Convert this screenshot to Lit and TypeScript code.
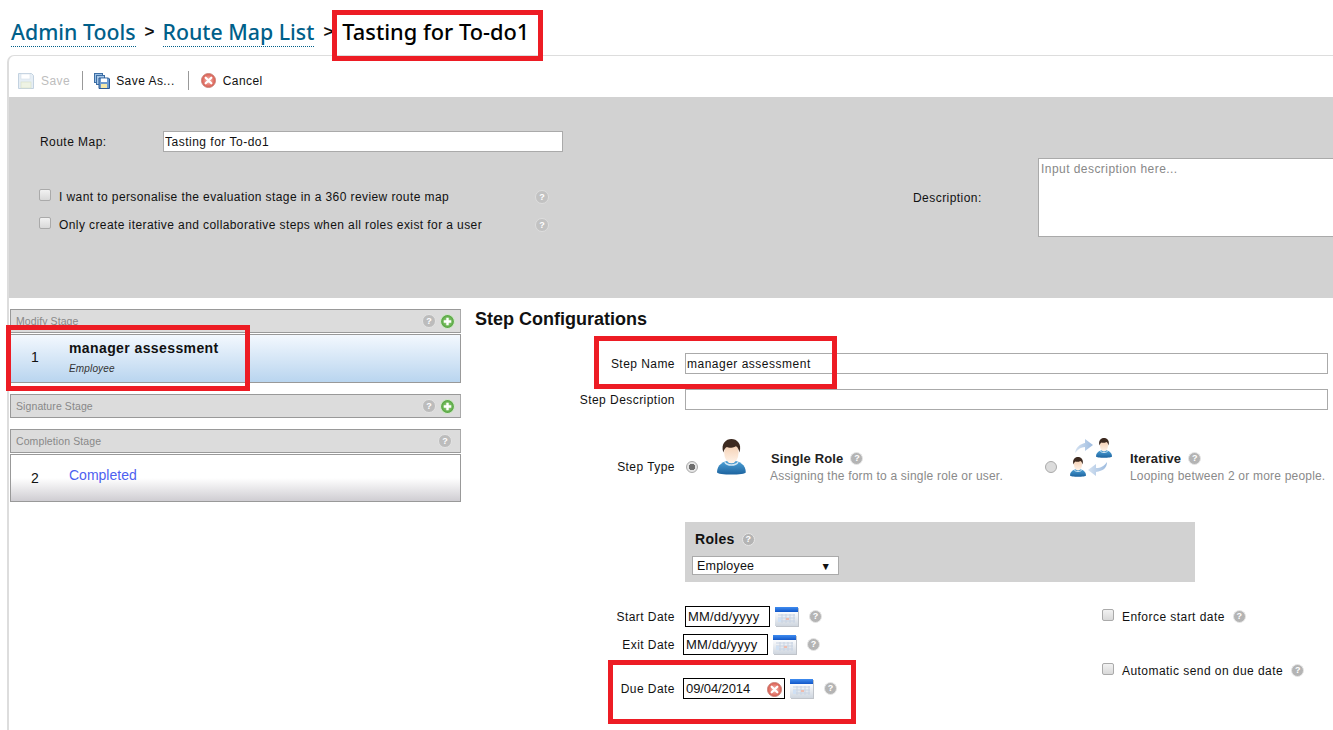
import { LitElement, html, css, svg } from "lit";
import { customElement } from "lit/decorators.js";

const defs = svg`<defs>
  <linearGradient id="sk" x1="0" y1="0" x2="0" y2="1"><stop offset="0" stop-color="#f3c9a8"/><stop offset="1" stop-color="#fff4ea"/></linearGradient>
  <linearGradient id="bl" x1="0" y1="0" x2="0" y2="1"><stop offset="0" stop-color="#4fa3d8"/><stop offset="1" stop-color="#1c639f"/></linearGradient>
  <linearGradient id="ar" x1="0" y1="0" x2="1" y2="0"><stop offset="0" stop-color="#d5e2f1"/><stop offset="1" stop-color="#9dbbdf"/></linearGradient>
  <linearGradient id="calt" x1="0" y1="0" x2="0" y2="1"><stop offset="0" stop-color="#3f8cf0"/><stop offset="1" stop-color="#1257c8"/></linearGradient>
  <linearGradient id="calb" x1="0" y1="0" x2="0" y2="1"><stop offset="0" stop-color="#fbfcfe"/><stop offset="1" stop-color="#cfd6df"/></linearGradient>
  <radialGradient id="rd"><stop offset="0" stop-color="#f8c2ba"/><stop offset="1" stop-color="#d9574b"/></radialGradient>
  <radialGradient id="gr"><stop offset="0" stop-color="#a6dc8c"/><stop offset="1" stop-color="#4c9f38"/></radialGradient>
</defs>`;

const person = (x: number, y: number, s: number) => svg`<g transform="translate(${x} ${y}) scale(${s})">
  <path d="M0 37C0 29 7 24 16 24S32 29 32 37C32 39 24 39.500 16 39.500S0 39 0 37z" fill="url(#bl)"/>
  <path d="M9 25c2 4 12 4 14 0l1 1c-2 5-14 5-16 0z" fill="#cfe6f4"/>
  <ellipse cx="16" cy="15" rx="8" ry="12" fill="url(#sk)"/>
  <path d="M7 15C4 5 10 0 16 0S28 5 25 15C24 11 23 9 21 8 17 10 13 10 11 9 9 10 8 12 7 15z" fill="#3d2a20"/>
</g>`;

const singleIcon = html`<svg class="person" width="33" height="39" viewBox="0 0 33 39">${defs}${person(1, 1, 0.9)}</svg>`;
const iterIcon = html`<svg class="iter" width="44" height="40" viewBox="0 0 44 40">${defs}
  <path d="M7 16C8 10 12 7 17 6V2L25 8 17 14V10C13 10 10 12 7 16z" fill="url(#ar)"/>
  <path d="M39 25C39 31 35 34 28 35V39L20 33 28 27V31C33 31 36 29 39 25z" fill="url(#ar)"/>
  ${person(28, 1, 0.5)}${person(2, 20, 0.5)}
</svg>`;
const floppy = html`<svg width="16" height="16" viewBox="0 0 16 16"><path d="M.5.5h13l2 2v13H.5z" fill="#e6eef5" stroke="#c3d2e0"/><rect x="3" y="1" width="9" height="5" fill="#fff" stroke="#d5dfe9" stroke-width=".6"/><rect x="3" y="9" width="10" height="6" fill="#eef3e4" stroke="#d5dfc5" stroke-width=".6"/></svg>`;
const saveAs = html`<svg width="16" height="16" viewBox="0 0 16 16"><rect x=".5" y=".5" width="8" height="9" fill="#9cc0e4" stroke="#3c6ea5"/><rect x="2.500" y="2.500" width="8" height="9" fill="#a9c8e8" stroke="#3c6ea5"/><path d="M5 5h9.500l1 1v9.500H5z" fill="#6c9bd0" stroke="#2b5a94"/><rect x="7" y="5.500" width="6" height="3.500" fill="#fff"/><rect x="7" y="11" width="6" height="4" fill="#f3e7a8"/></svg>`;
const xIcon = (s: number) => html`<svg class="x" width="${s}" height="${s}" viewBox="0 0 16 16">${defs}<circle cx="8" cy="8" r="7.500" fill="url(#rd)" stroke="#c9857c"/><path d="M5 5l6 6M11 5l-6 6" stroke="#fff" stroke-width="2.400" stroke-linecap="round"/></svg>`;
const plus = html`<svg class="plus" width="15" height="15" viewBox="0 0 14 14">${defs}<circle cx="7" cy="7" r="6.500" fill="url(#gr)" stroke="#d5e8cf"/><path d="M7 3.500v7M3.500 7h7" stroke="#fff" stroke-width="2.200"/></svg>`;
const cal = html`<svg class="cal" width="24" height="20" viewBox="0 0 24 20">${defs}<rect x="1" y="1" width="23" height="19" fill="#c0c4ca"/><rect x="0" y="0" width="23" height="5" fill="url(#calt)"/><rect x="0" y="5" width="23" height="14" fill="url(#calb)"/><path d="M3 8h17M3 11h17M3 14h17M7 7v9M11 7v9M15 7v9M19 7v9" stroke="#c8d3e3"/><rect x="11" y="11" width="3" height="2" fill="#eebcae"/><rect x="3" y="11" width="3" height="4" fill="#cfe0f4"/></svg>`;
const help = () => html`<span class="help">?</span>`;

@customElement("app-root")
export class AppRoot extends LitElement {
  static styles = css`
    :host { display: block; position: relative; width: 1333px; height: 730px; overflow: hidden; background: #fff; font: 12px "Liberation Sans", Arial, sans-serif; color: #111; letter-spacing: .45px; }
    * { box-sizing: border-box; }
    .crumbs { height: 55px; padding: 14px 0 0 11px; display: flex; align-items: flex-start; font: 500 21.300px/36px "Noto Sans", sans-serif; letter-spacing: 0; color: #000; }
    .crumbs a { color: #00608a; border-bottom: 1px dotted #00608a; height: 33px; line-height: 35px; }
    .crumbs .sep { font: bold 17px/36px "Liberation Sans", sans-serif; margin: 0 8px 0 9px; color: #111; }
    .crumbs .last { font-size: 21.800px; margin-left: 1px; }
    .panel { margin-left: 7px; border-left: 2px solid #ddd; border-top: 1px solid #ddd; border-top-left-radius: 7px; height: 675px; }
    .toolbar { height: 41px; display: flex; align-items: center; padding: 8px 0 0 9px; }
    .toolbar .tb { display: flex; align-items: center; gap: 6px; }
    .toolbar .can { gap: 7px; }
    .toolbar .dis { color: #bdbdbd; gap: 7px; }
    .toolbar .div { width: 1px; height: 19px; background: #999; margin: 0 12px 0 13px; }
    .toolbar .tb:first-child + .div { margin-left: 12px; margin-right: 11px; }
    .gray { height: 201px; background: #d2d2d2; display: flex; }
    .gray .left { padding: 34px 0 0 31px; width: 904px; flex: none; }
    .gray .help { width: 14px; height: 14px; background: #c2c2c2; border-color: #dedede; }
    .routerow { display: flex; align-items: center; height: 21px; }
    .routerow label { width: 123px; }
    .routerow input { width: 400px; height: 21px; }
    input.txt { border: 1px solid #aaa; background: #fff; font: 12px "Liberation Sans", sans-serif; letter-spacing: .5px; padding: 0 1px; color: #111; outline: none; }
    .chk { display: flex; align-items: center; height: 28px; }
    .chks { margin-top: 31px; letter-spacing: .41px; }
    .box { appearance: none; -webkit-appearance: none; margin: -4px 8px 0 -1px; width: 12px; height: 12px; border: 1px solid #aaa; border-radius: 2px; background: linear-gradient(#f2f2f2, #d9d9d9); flex: none; }
    .chk span.t { width: 476px; }
    .help { display: inline-flex; align-items: center; justify-content: center; width: 13px; height: 13px; border-radius: 50%; background: #b4b4b4; border: 1px solid #e6e6e6; color: #fff; font: bold 9px/1 "Liberation Sans", sans-serif; letter-spacing: 0; flex: none; }
    .desc { display: flex; padding-top: 61px; }
    .desc label { width: 125px; padding-top: 33px; }
    .desc textarea { width: 320px; height: 79px; border: 1px solid #aaa; background: #fff; font: 12px "Liberation Sans", sans-serif; letter-spacing: .45px; padding: 3px 2px; resize: none; outline: none; flex: none; }
    .desc textarea::placeholder { color: #888; }
    .body { display: flex; padding-top: 11px; }
    .stages { margin-left: 1px; width: 451px; flex: none; }
    .sh { height: 24px; border: 1px solid #999; border-right-color: #aaa; background: #dcdcdc; display: flex; align-items: center; padding: 0 5px; color: #888; font-size: 10.500px; gap: 4px; letter-spacing: .1px; }
    .sh .n { flex: 1; }
    .sh .help { width: 14px; height: 14px; background: #bcbcbc; border-color: #e4e4e4; }
    .sh .help:last-child { margin-right: 3px; }
    .item { margin-top: 1px; height: 49px; border: 1px solid #999; display: flex; }
    .item .num { width: 58px; padding-left: 20px; font-size: 14px; letter-spacing: 0; line-height: 17px; flex: none; }
    .i1 { background: linear-gradient(#f3f8fe, #b9d5ef); }
    .i1 .num { padding-top: 14px; }
    .i1 .tt { font-weight: bold; font-size: 14px; padding-top: 5px; line-height: 17px; letter-spacing: .4px; }
    .i1 .sub { font-style: italic; font-size: 10px; color: #333; margin-top: 6px; line-height: 12px; letter-spacing: .15px; }
    .i2 { height: 48px; background: linear-gradient(#fff 0 50%, #cfcdd2); }
    .i2 .num { padding-top: 15px; }
    .i2 .tt { color: #4d5ff0; font-size: 14px; padding-top: 12px; line-height: 17px; letter-spacing: 0; }
    .gap1 { margin-top: 11px; }
    .gap2 { margin-top: 11px; }
    .form { margin-left: 14px; flex: 1; }
    .title { font: bold 18px/21px "Liberation Sans", sans-serif; letter-spacing: 0; color: #111; height: 22px; }
    .frow { display: flex; align-items: center; height: 21px; gap: 10px; }
    .frow label { width: 200px; text-align: right; flex: none; }
    .frow input { width: 643px; height: 21px; }
    .r1 { margin-top: 22px; }
    .r2 { margin-top: 15px; }
    .st { display: flex; margin-top: 28px; height: 84px; align-items: flex-start; }
    .st label { width: 200px; text-align: right; flex: none; margin-top: 22px; }
    .radio { appearance: none; -webkit-appearance: none; width: 12px; height: 12px; border-radius: 50%; border: 1px solid #aaa; background: #dcdcdc; margin: 23px 0 0; flex: none; }
    .radio.on { background: radial-gradient(circle, #6e6e6e 0 3px, #e5e5e5 3.500px); }
    .r-a { margin-left: 11px; }
    .st .person { margin-left: 18px; flex: none; }
    .st .iter { margin: -1px 0 0 11px; flex: none; }
    .opt { margin-left: 22px; width: 274px; padding-top: 12px; flex: none; }
    .opt.o2 { margin-left: 18px; width: 200px; }
    .opt .h { font-weight: bold; font-size: 13px; letter-spacing: .15px; display: flex; align-items: center; gap: 7px; height: 16px; color: #222; }
    .opt .d { color: #8a8a8a; margin: 2px 0 0 -1px; line-height: 16px; white-space: nowrap; letter-spacing: .2px; }
    .o2 .d { margin-left: 0; }
    .roles { margin-left: 210px; width: 510px; height: 60px; background: #d2d2d2; padding: 9px 0 0 7px; }
    .roles .h { font: bold 14px/16px "Liberation Sans", sans-serif; letter-spacing: .3px; padding-left: 3px; display: flex; align-items: center; gap: 7px; color: #111; }
    .sel { margin-top: 9px; width: 147px; height: 19px; background: #fff; border: 1px solid #aaa; display: flex; align-items: center; justify-content: space-between; padding: 0 7px 0 4px; font-size: 12.500px; letter-spacing: .2px; color: #111; }
    .sel span { font-size: 10.500px; color: #111; }
    .dates { display: flex; margin-top: 24px; }
    .dl { width: 627px; flex: none; }
    .drow { display: flex; align-items: center; height: 21px; }
    .drow label { width: 200px; text-align: right; flex: none; }
    .dbox { border: 1px solid #000; height: 21px; background: #fff; display: flex; align-items: center; padding: 0 2px; flex: none; }
    .dbox input { border: 0; outline: 0; width: 100%; padding: 0; background: none; font: 13px "Liberation Sans", sans-serif; letter-spacing: .2px; color: #111; }
    .drow .cal { margin-left: 5px; flex: none; }
    .drow .help { margin-left: 10px; }
    .d1 .dbox { width: 85px; margin-left: 10px; }
    .d2 { margin-top: 7px; }
    .d2 .dbox { width: 85px; margin-left: 8px; }
    .d3 { margin-top: 23px; }
    .d3 .dbox { width: 102px; margin-left: 8px; position: relative; padding-right: 18px; }
    .d3 .dbox input { letter-spacing: -.1px; }
    .d3 .dbox .x { position: absolute; right: 2px; top: 3px; }
    .dchk { display: flex; align-items: center; height: 21px; gap: 8px; }
    .dchk .box { margin: -4px 0 0; }
    .dc2 { margin-top: 33px; }
    .note { position: absolute; border: 5px solid #ed1c24; pointer-events: none; }
  `;

  render() {
    return html`
      <div class="crumbs"><a>Admin Tools</a><span class="sep">&gt;</span><a>Route Map List</a><span class="sep">&gt;</span><span class="last">Tasting for To-do1</span></div>
      <div class="panel">
        <div class="toolbar">
          <span class="tb dis">${floppy}<span>Save</span></span><span class="div"></span>
          <span class="tb">${saveAs}<span>Save As...</span></span><span class="div"></span>
          <span class="tb can">${xIcon(15)}<span>Cancel</span></span>
        </div>
        <div class="gray">
          <div class="left">
            <div class="routerow"><label>Route Map:</label><input class="txt" .value=${"Tasting for To-do1"} /></div>
            <div class="chks">
              <div class="chk"><input type="checkbox" class="box" /><span class="t">I want to personalise the evaluation stage in a 360 review route map</span>${help()}</div>
              <div class="chk"><input type="checkbox" class="box" /><span class="t">Only create iterative and collaborative steps when all roles exist for a user</span>${help()}</div>
            </div>
          </div>
          <div class="desc"><label>Description:</label><textarea placeholder="Input description here..."></textarea></div>
        </div>
        <div class="body">
          <div class="stages">
            <div class="sh"><span class="n">Modify Stage</span>${help()}${plus}</div>
            <div class="item i1"><div class="num">1</div><div><div class="tt">manager assessment</div><div class="sub">Employee</div></div></div>
            <div class="sh gap1"><span class="n">Signature Stage</span>${help()}${plus}</div>
            <div class="sh gap2"><span class="n">Completion Stage</span>${help()}</div>
            <div class="item i2"><div class="num">2</div><div class="tt">Completed</div></div>
          </div>
          <div class="form">
            <div class="title">Step Configurations</div>
            <div class="frow r1"><label>Step Name</label><input class="txt" .value=${"manager assessment"} /></div>
            <div class="frow r2"><label>Step Description</label><input class="txt" /></div>
            <div class="st">
              <label>Step Type</label>
              <input type="radio" name="st" class="radio on r-a" />${singleIcon}
              <div class="opt"><div class="h">Single Role ${help()}</div><div class="d">Assigning the form to a single role or user.</div></div>
              <input type="radio" name="st" class="radio" />${iterIcon}
              <div class="opt o2"><div class="h">Iterative ${help()}</div><div class="d">Looping between 2 or more people.</div></div>
            </div>
            <div class="roles">
              <div class="h">Roles ${help()}</div>
              <div class="sel">Employee<span>▼</span></div>
            </div>
            <div class="dates">
              <div class="dl">
                <div class="drow d1"><label>Start Date</label><div class="dbox"><input .value=${"MM/dd/yyyy"} /></div>${cal}${help()}</div>
                <div class="drow d2"><label>Exit Date</label><div class="dbox"><input .value=${"MM/dd/yyyy"} /></div>${cal}${help()}</div>
                <div class="drow d3"><label>Due Date</label><div class="dbox"><input .value=${"09/04/2014"} />${xIcon(15)}</div>${cal}${help()}</div>
              </div>
              <div>
                <div class="dchk"><input type="checkbox" class="box" /><span>Enforce start date</span>${help()}</div>
                <div class="dchk dc2"><input type="checkbox" class="box" /><span>Automatic send on due date</span>${help()}</div>
              </div>
            </div>
          </div>
        </div>
      </div>
      <div class="note" style="left:332px;top:10px;width:211px;height:51px"></div>
      <div class="note" style="left:6px;top:325px;width:244px;height:66px"></div>
      <div class="note" style="left:594px;top:336px;width:243px;height:53px"></div>
      <div class="note" style="left:608px;top:660px;width:248px;height:64px"></div>
    `;
  }
}
